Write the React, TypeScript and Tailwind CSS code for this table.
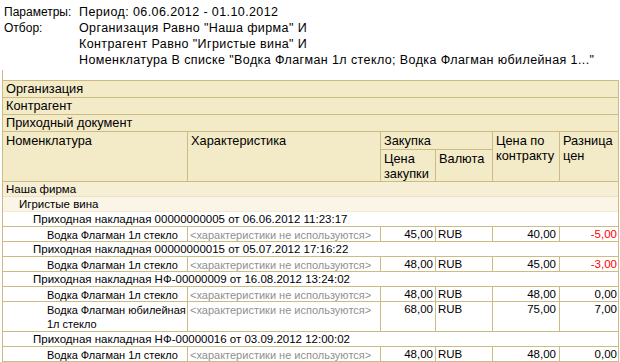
import React from "react";

const B = "border-[#cdbb84]";

function HeaderRow({ text }: { text: string }) {
  return (
    <div className={`h-[17px] border-b ${B} bg-[#f3eac7] pl-[3px] text-[12.8px] leading-[16px]`}>{text}</div>
  );
}

function DocRow({ text }: { text: string }) {
  return (
    <div className={`h-[15px] border-b ${B} bg-white pl-[30px] pt-[1px] text-[11.5px] leading-[13px]`}>{text}</div>
  );
}

function ItemRow({
  name,
  price,
  contract,
  diff,
  tall,
}: {
  name: React.ReactNode;
  price: string;
  contract: string;
  diff: string;
  tall?: boolean;
}) {
  const h = tall ? "h-[30px]" : "h-[15px]";
  const neg = diff.startsWith("-");
  return (
    <div className={`flex ${h} border-b ${B} bg-white text-[11px] leading-[14px]`}>
      <div className={`w-[185px] shrink-0 border-r ${B} pl-[44px] pt-[1px] whitespace-nowrap`}>{name}</div>
      <div
        className={`w-[193px] shrink-0 border-r ${B} pl-[2px] pt-[1px] text-[#909090] whitespace-nowrap overflow-hidden`}
      >
        &lt;характеристики не используются&gt;
      </div>
      <div className={`w-[55px] shrink-0 border-r ${B} pr-[2px] pt-[1px] text-right text-[11.5px] leading-[13px]`}>
        {price}
      </div>
      <div className={`w-[57px] shrink-0 border-r ${B} pl-[2px] pt-[1px] text-[11.5px] leading-[13px]`}>RUB</div>
      <div className={`w-[67px] shrink-0 border-r ${B} pr-[3px] pt-[1px] text-right text-[11.5px] leading-[13px]`}>
        {contract}
      </div>
      <div
        className={`w-[59px] shrink-0 pr-[2px] pt-[1px] text-right text-[11.5px] leading-[13px] ${
          neg ? "text-[#ff0000]" : ""
        }`}
      >
        {diff}
      </div>
    </div>
  );
}

export default function App() {
  return (
    <div
      className="w-[620px] h-[362px] overflow-hidden bg-white text-black"
      style={{ fontFamily: '"Liberation Sans", Arial, sans-serif' }}
    >
      <div className="pt-[4px] pl-[4px] text-[12.5px] leading-[16px]">
        <div className="grid grid-cols-[75px_1fr]">
          <div className="text-[12px]">Параметры:</div>
          <div className="tracking-[0.4px]">Период: 06.06.2012 - 01.10.2012</div>
          <div className="text-[12px]">Отбор:</div>
          <div className="tracking-[0.4px]">
            <div>Организация Равно "Наша фирма" И</div>
            <div>Контрагент Равно "Игристые вина" И</div>
            <div className="whitespace-nowrap">
              Номенклатура В списке "Водка Флагман 1л стекло; Водка Флагман юбилейная 1..."
            </div>
          </div>
        </div>
      </div>
      <div className={`ml-[2px] mt-[2px] h-[10px] w-0 border-l ${B}`} />
      <div className={`ml-[2px] w-[617px] border-l border-t border-r ${B}`}>
        <HeaderRow text="Организация" />
        <HeaderRow text="Контрагент" />
        <HeaderRow text="Приходный документ" />
        <div className={`flex h-[50px] border-b ${B} bg-[#f3eac7] text-[12.8px] leading-[15px]`}>
          <div className={`w-[185px] shrink-0 border-r ${B} pl-[3px] pt-[1px]`}>Номенклатура</div>
          <div className={`w-[193px] shrink-0 border-r ${B} pl-[3px] pt-[1px]`}>Характеристика</div>
          <div className={`w-[112px] shrink-0 border-r ${B} flex flex-col`}>
            <div className={`h-[18px] border-b ${B} pl-[3px] pt-[1px]`}>Закупка</div>
            <div className="flex flex-1">
              <div className={`w-[55px] shrink-0 border-r ${B} pl-[3px] pt-[1px]`}>
                Цена
                <br />
                закупки
              </div>
              <div className="w-[56px] shrink-0 pl-[3px] pt-[1px]">Валюта</div>
            </div>
          </div>
          <div className={`w-[67px] shrink-0 border-r ${B} pl-[3px] pt-[1px] whitespace-nowrap`}>
            Цена по
            <br />
            контракту
          </div>
          <div className="w-[58px] shrink-0 pl-[3px] pt-[1px]">
            Разница
            <br />
            цен
          </div>
        </div>
        <div className="h-[15px] border-b border-[#ece2c0] bg-[#f6eed5] pl-[3px] pt-[1px] text-[11.5px] leading-[13px]">
          Наша фирма
        </div>
        <div className="h-[15px] border-b border-[#f2ead3] bg-[#faf5e6] pl-[16px] pt-[1px] text-[11.5px] leading-[13px]">
          Игристые вина
        </div>
        <DocRow text="Приходная накладная 00000000005 от 06.06.2012 11:23:17" />
        <ItemRow name="Водка Флагман 1л стекло" price="45,00" contract="40,00" diff="-5,00" />
        <DocRow text="Приходная накладная 00000000015 от 05.07.2012 17:16:22" />
        <ItemRow name="Водка Флагман 1л стекло" price="48,00" contract="45,00" diff="-3,00" />
        <DocRow text="Приходная накладная НФ-00000009 от 16.08.2012 13:24:02" />
        <ItemRow name="Водка Флагман 1л стекло" price="48,00" contract="48,00" diff="0,00" />
        <ItemRow
          name={
            <>
              Водка Флагман юбилейная
              <br />
              1л стекло
            </>
          }
          price="68,00"
          contract="75,00"
          diff="7,00"
          tall
        />
        <DocRow text="Приходная накладная НФ-00000016 от 03.09.2012 12:00:02" />
        <ItemRow name="Водка Флагман 1л стекло" price="48,00" contract="48,00" diff="0,00" />
      </div>
    </div>
  );
}
